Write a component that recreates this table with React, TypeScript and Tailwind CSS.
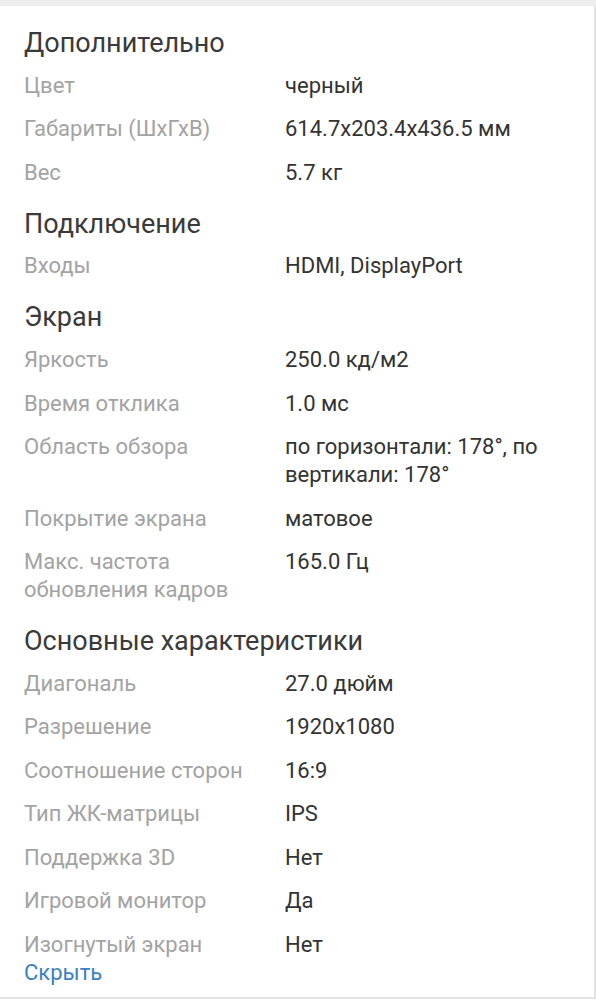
import React from "react";

type Row = { label: string; value: string };
type Section = { title: string; rows: Row[] };

const sections: Section[] = [
  {
    title: "Дополнительно",
    rows: [
      { label: "Цвет", value: "черный" },
      { label: "Габариты (ШхГхВ)", value: "614.7x203.4x436.5 мм" },
      { label: "Вес", value: "5.7 кг" },
    ],
  },
  {
    title: "Подключение",
    rows: [{ label: "Входы", value: "HDMI, DisplayPort" }],
  },
  {
    title: "Экран",
    rows: [
      { label: "Яркость", value: "250.0 кд/м2" },
      { label: "Время отклика", value: "1.0 мс" },
      { label: "Область обзора", value: "по горизонтали: 178°, по вертикали: 178°" },
      { label: "Покрытие экрана", value: "матовое" },
      { label: "Макс. частота обновления кадров", value: "165.0 Гц" },
    ],
  },
  {
    title: "Основные характеристики",
    rows: [
      { label: "Диагональ", value: "27.0 дюйм" },
      { label: "Разрешение", value: "1920x1080" },
      { label: "Соотношение сторон", value: "16:9" },
      { label: "Тип ЖК-матрицы", value: "IPS" },
      { label: "Поддержка 3D", value: "Нет" },
      { label: "Игровой монитор", value: "Да" },
      { label: "Изогнутый экран", value: "Нет" },
    ],
  },
];

export default function App() {
  return (
    <div className="min-h-screen bg-white font-['Roboto',sans-serif]">
      <div className="h-[6px] bg-[#eeeeee]" />
      <div className="h-[993px] border-r-2 border-b-2 border-[#e2e2e2] px-6 pt-[21px]">
        {sections.map((section, si) => (
          <div key={section.title} className={si > 0 ? "mt-[21px]" : ""}>
            <h2 className="text-[27px] leading-8 text-[#3a3a3a]">{section.title}</h2>
            {section.rows.map((row, ri) => (
              <div
                key={row.label}
                className={`grid grid-cols-[245px_1fr] gap-x-4 text-[22px] leading-7 ${
                  ri === 0 ? "mt-[12.7px]" : "mt-[15.5px]"
                }`}
              >
                <div className="text-[#a3a3a3]">{row.label}</div>
                <div className="text-[#333333]">{row.value}</div>
              </div>
            ))}
          </div>
        ))}
        <button className="block text-[22px] leading-7 text-[#3a81c3]">Скрыть</button>
      </div>
    </div>
  );
}
